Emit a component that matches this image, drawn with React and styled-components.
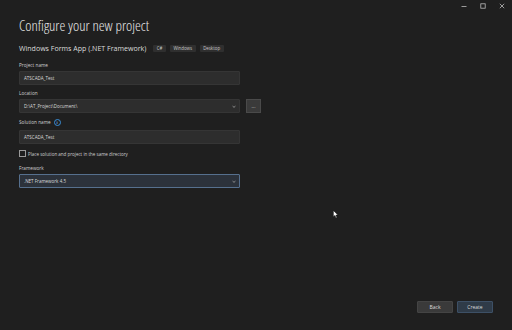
import styled, { createGlobalStyle } from "styled-components";

const GlobalStyle = createGlobalStyle`
  html, body {
    margin: 0;
    padding: 0;
    background: #1f1f1f;
  }
  body {
    font-family: "Open Sans", "Liberation Sans", sans-serif;
    color: #d6d6d6;
  }
`;

const Window = styled.div`
  position: relative;
  width: 512px;
  height: 330px;
  background: #1f1f1f;
  overflow: hidden;
  box-sizing: border-box;
  padding: 12px 0 0 19px;
`;

const Controls = styled.div`
  position: absolute;
  top: 3px;
  right: 7px;
  display: flex;
  gap: 13px;
  align-items: center;
  height: 6px;
`;

const Ctrl = styled.div`
  width: 6px;
  height: 6px;
  display: flex;
  align-items: center;
  justify-content: center;
`;

const Title = styled.h1`
  margin: 0;
  font-family: "Open Sans", sans-serif;
  font-weight: 350;
  font-stretch: 85%;
  font-size: 14.8px;
  line-height: 26px;
  color: #e8e8e8;
`;

const SubRow = styled.div`
  display: flex;
  align-items: center;
  gap: 4px;
  margin-top: 3px;
  height: 14px;
`;

const SubTitle = styled.div`
  font-size: 7.05px;
  color: #dcdcdc;
  margin-right: 3px;
`;

const Tag = styled.span`
  font-size: 4.4px;
  color: #c8c8c8;
  background: #2f2f2f;
  padding: 0 3.5px;
  height: 7px;
  line-height: 7px;
  border-radius: 1px;
`;

const Form = styled.div`
  display: flex;
  flex-direction: column;
  margin-top: 6px;
  width: 243px;
`;

const Label = styled.div`
  display: flex;
  align-items: center;
  gap: 3px;
  font-size: 4.7px;
  color: #cfcfcf;
  height: ${(p) => (p.$tall ? "10px" : "8px")};
  margin-bottom: ${(p) => (p.$tall ? "3px" : "2px")};
`;

const Field = styled.div`
  display: flex;
  align-items: center;
  gap: 6px;
  margin-bottom: ${(p) => p.$gap || 4}px;
`;

const Input = styled.div`
  position: relative;
  box-sizing: border-box;
  width: 221px;
  height: 14px;
  display: flex;
  align-items: center;
  padding-left: 4px;
  font-size: 4.5px;
  color: #dadada;
  background: ${(p) => (p.$focus ? "#2c323b" : "#2d2d2d")};
  border: 1px solid ${(p) => (p.$focus ? "#56708e" : "#353535")};
  border-radius: 1px;
`;

const Arrow = styled.span`
  position: absolute;
  right: 3px;
  top: 4px;
  width: 3px;
  height: 3px;
  border-right: 1px solid #8a8a8a;
  border-bottom: 1px solid #8a8a8a;
  transform: scale(0.6) rotate(45deg);
`;

const Browse = styled.div`
  box-sizing: border-box;
  width: 15px;
  height: 14px;
  background: #3a3a3a;
  border: 1px solid #4a4a4a;
  display: flex;
  align-items: center;
  justify-content: center;
  font-size: 5px;
  color: #cfcfcf;
`;

const Info = styled.span`
  box-sizing: border-box;
  width: 7px;
  height: 7px;
  border-radius: 50%;
  border: 1px solid #3b8fd6;
  color: #6ab0ee;
  font-size: 4px;
  line-height: 5px;
  text-align: center;
  font-weight: 700;
`;

const CheckRow = styled.div`
  display: flex;
  align-items: center;
  gap: 2px;
  height: 7px;
  margin-bottom: 7px;
  font-size: 4.5px;
  color: #cfcfcf;
`;

const Box = styled.span`
  box-sizing: border-box;
  width: 7px;
  height: 7px;
  border: 1px solid #9a9a9a;
  background: #1f1f1f;
`;

const Footer = styled.div`
  position: absolute;
  right: 19px;
  bottom: 17px;
  display: flex;
  gap: 4px;
`;

const Button = styled.div`
  box-sizing: border-box;
  width: 36px;
  height: 12px;
  display: flex;
  align-items: center;
  justify-content: center;
  font-size: 5px;
  color: #dcdcdc;
  background: ${(p) => (p.$primary ? "#2f3b48" : "#3a3a3a")};
  border: 1px solid ${(p) => (p.$primary ? "#3d5066" : "#444")};
  border-radius: 1px;
`;

const Cursor = styled.svg`
  position: absolute;
  left: 333px;
  top: 210px;
`;

export default function App() {
  return (
    <>
      <GlobalStyle />
      <Window>
        <Controls>
          <Ctrl>
            <svg width="6" height="6" viewBox="0 0 6 6">
              <line x1="0.5" y1="3.5" x2="5.5" y2="3.5" stroke="#bbb" strokeWidth="0.8" />
            </svg>
          </Ctrl>
          <Ctrl>
            <svg width="6" height="6" viewBox="0 0 6 6">
              <rect x="0.8" y="0.8" width="4.4" height="4.4" fill="none" stroke="#bbb" strokeWidth="0.8" />
            </svg>
          </Ctrl>
          <Ctrl>
            <svg width="6" height="6" viewBox="0 0 6 6">
              <path d="M0.8 0.8 L5.2 5.2 M5.2 0.8 L0.8 5.2" stroke="#bbb" strokeWidth="0.8" />
            </svg>
          </Ctrl>
        </Controls>

        <Title>Configure your new project</Title>
        <SubRow>
          <SubTitle>Windows Forms App (.NET Framework)</SubTitle>
          <Tag>C#</Tag>
          <Tag>Windows</Tag>
          <Tag>Desktop</Tag>
        </SubRow>

        <Form>
          <Label>Project name</Label>
          <Field>
            <Input>ATSCADA_Test</Input>
          </Field>

          <Label>Location</Label>
          <Field>
            <Input>
              D:\AT_Project\Document\
              <Arrow />
            </Input>
            <Browse>...</Browse>
          </Field>

          <Label $tall>
            Solution name <Info>i</Info>
          </Label>
          <Field $gap={6}>
            <Input>ATSCADA_Test</Input>
          </Field>

          <CheckRow>
            <Box />
            Place solution and project in the same directory
          </CheckRow>

          <Label>Framework</Label>
          <Field>
            <Input $focus>
              .NET Framework 4.5
              <Arrow />
            </Input>
          </Field>
        </Form>

        <Footer>
          <Button>Back</Button>
          <Button $primary>Create</Button>
        </Footer>

        <Cursor width="6" height="9" viewBox="0 0 8 12">
          <path d="M0.5 0.5 L0.5 9 L2.6 7.2 L4 10.5 L5.3 9.9 L3.9 6.8 L6.6 6.8 Z" fill="#fff" stroke="#000" strokeWidth="0.6" />
        </Cursor>
      </Window>
    </>
  );
}
